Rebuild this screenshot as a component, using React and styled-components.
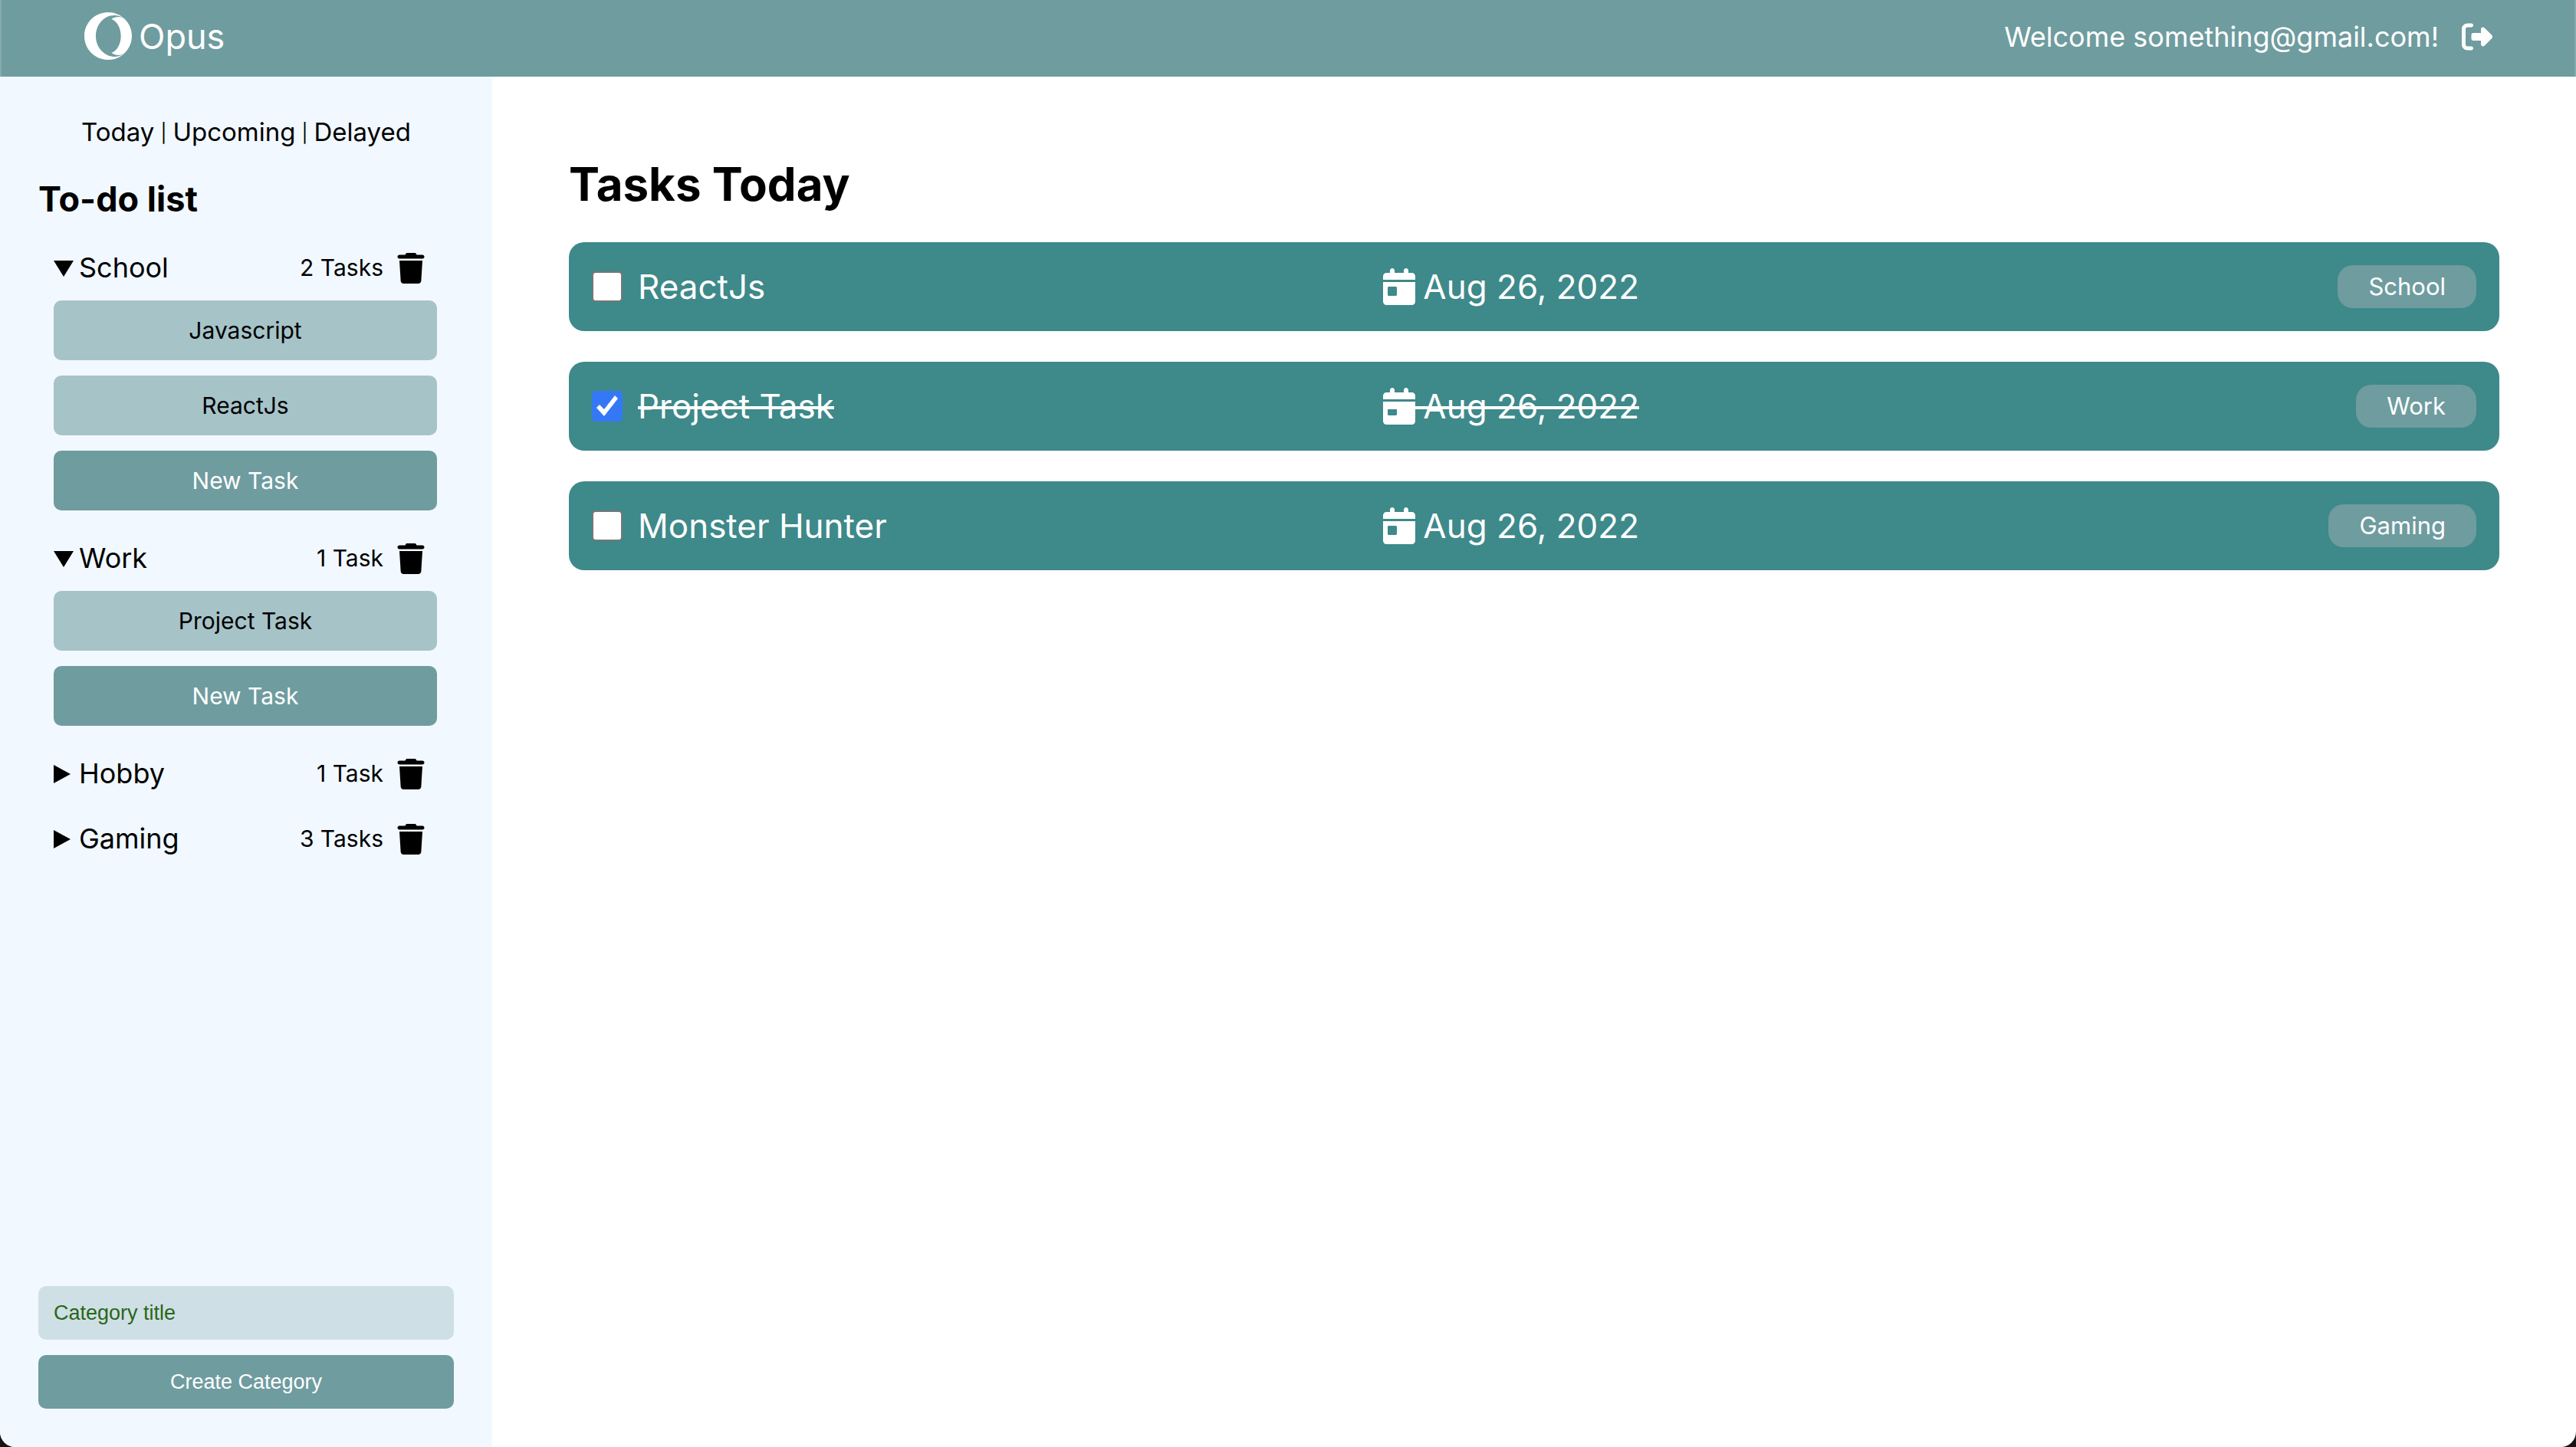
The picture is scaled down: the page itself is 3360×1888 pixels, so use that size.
import React, { useState } from 'react';
import styled, { createGlobalStyle } from 'styled-components';
import { FaOpera, FaRightFromBracket, FaTrash, FaCalendarDay } from 'react-icons/fa6';

const colors = {
  bar: '#6f9c9f',
  row: '#3e898a',
  soft: '#a6c3c8',
  field: '#cfdfe6',
  side: '#f1f8ff',
};

const GlobalStyle = createGlobalStyle`
  *, *::before, *::after { box-sizing: border-box; }
  html { background: #161514; }
  body { margin: 0; font-family: Inter, "Liberation Sans", sans-serif; color: #000; }
  button, input { font: inherit; color: inherit; margin: 0; }
  h1, h2, ul { margin: 0; padding: 0; list-style: none; }
  a { color: inherit; text-decoration: none; }
`;

const Page = styled.div`
  min-height: 100vh;
  display: flex;
  flex-direction: column;
  overflow: hidden;
  background: #fff;
  border-radius: 0 0 20px 20px;
`;

const Header = styled.header`
  height: 100px;
  display: flex;
  align-items: center;
  justify-content: space-between;
  padding: 0 107px;
  border: solid #86abae;
  border-width: 0 2px;
  background: ${colors.bar};
  color: #fff;
`;

const Brand = styled.a`
  display: flex;
  align-items: center;
  gap: 8px;
  padding-bottom: 4px;
  font-size: 45px;
  line-height: 64px;
  svg { width: 64px; height: 64px; }
`;

const Account = styled.div`
  display: flex;
  align-items: center;
  gap: 30px;
  padding-bottom: 4px;
  font-size: 36px;
  line-height: 48px;
`;

const IconButton = styled.button`
  display: flex;
  padding: 0;
  border: 0;
  background: none;
  cursor: pointer;
  svg { width: ${(p) => p.$size}px; height: ${(p) => p.$size}px; }
`;

const Body = styled.div`
  flex: 1;
  display: flex;
`;

const Sidebar = styled.aside`
  flex: 0 0 642px;
  display: flex;
  flex-direction: column;
  gap: 40px;
  padding: 50px;
  background: ${colors.side};
`;

const Filters = styled.nav`
  display: flex;
  justify-content: center;
  gap: 8px;
  height: 42px;
  font-size: 33px;
  line-height: 44px;
`;

const Divider = styled.span`
  font-size: 24px;
  line-height: 48px;
`;

const SideTitle = styled.h2`
  font-size: 45px;
  font-weight: 700;
  line-height: 55px;
`;

const Categories = styled.ul`
  flex: 1;
  display: flex;
  flex-direction: column;
  gap: 40px;
  padding: 0 22px 0 20px;
`;

const Category = styled.li`
  display: flex;
  flex-direction: column;
  gap: 20px;
`;

const CategoryHead = styled.div`
  height: 45px;
  display: flex;
  align-items: center;
  gap: 16px;
  padding-right: 14px;
`;

const Toggle = styled.button`
  flex: 1;
  display: flex;
  align-items: center;
  gap: 7px;
  padding: 0;
  border: 0;
  background: none;
  font-size: 36px;
  line-height: 45px;
  text-align: left;
  cursor: pointer;
  svg { width: 26px; height: 26px; }
`;

const Count = styled.span`
  font-size: 30px;
  line-height: 45px;
`;

const SideButton = styled.button`
  height: 78px;
  border: 0;
  border-radius: 10px;
  background: ${(p) => (p.$primary ? colors.bar : colors.soft)};
  color: ${(p) => (p.$primary ? '#fff' : '#000')};
  font-size: 30px;
  cursor: pointer;
`;

const CreateForm = styled.form`
  display: flex;
  flex-direction: column;
  gap: 20px;
  font-family: "Liberation Sans", Arial, sans-serif;
  font-size: 27px;
`;

const TitleInput = styled.input`
  height: 70px;
  padding: 0 20px;
  border: 0;
  border-radius: 10px;
  background: ${colors.field};
  &::placeholder { color: #2a6717; opacity: 1; }
`;

const CreateButton = styled.button`
  height: 70px;
  border: 0;
  border-radius: 10px;
  background: ${colors.bar};
  color: #fff;
  cursor: pointer;
`;

const Main = styled.main`
  flex: 1;
  display: flex;
  flex-direction: column;
  gap: 38px;
  padding: 102px 100px 100px;
`;

const MainTitle = styled.h1`
  font-size: 60px;
  font-weight: 700;
  line-height: 76px;
`;

const TaskList = styled.ul`
  display: flex;
  flex-direction: column;
  gap: 40px;
`;

const TaskRow = styled.li`
  display: grid;
  grid-template-columns: 42% 1fr auto;
  align-items: center;
  padding: 30px;
  border-radius: 20px;
  background: ${colors.row};
  color: #fff;
  font-size: 44px;
  line-height: 56px;
`;

const TaskLabel = styled.label`
  display: flex;
  align-items: center;
  gap: 20px;
`;

const Checkbox = styled.input`
  appearance: none;
  width: 40px;
  height: 40px;
  border: 2px solid #767676;
  border-radius: 5px;
  background: #fff;
  &:checked {
    border: 0;
    background: #3478f6;
  }
  &:checked::before {
    content: "";
    display: block;
    height: 40px;
    background: #fff;
    clip-path: polygon(6px 22px, 10px 18px, 16px 24px, 30px 6px, 34px 10px, 16px 33px);
  }
`;

const Strikable = styled.span`
  position: relative;
  justify-self: start;
  display: inline-flex;
  align-items: center;
  gap: 10px;
  svg { width: 42px; height: 48px; }
  &::after {
    content: "";
    display: ${(p) => (p.$done ? 'block' : 'none')};
    position: absolute;
    left: 0;
    right: 0;
    top: 28px;
    height: 4px;
    background: #fff;
  }
`;

const Tag = styled.span`
  padding: 0 40px;
  border-radius: 20px;
  background: ${colors.bar};
  font-size: 31px;
  line-height: 56px;
`;

const Triangle = ({ open }) => (
  <svg viewBox="0 0 26 26" aria-hidden="true">
    <path d={open ? 'M0 3h26L13 24z' : 'M0 1v24l22-12z'} />
  </svg>
);

const initialCategories = [
  { name: 'School', count: '2 Tasks', open: true, tasks: ['Javascript', 'ReactJs'] },
  { name: 'Work', count: '1 Task', open: true, tasks: ['Project Task'] },
  { name: 'Hobby', count: '1 Task', open: false, tasks: [] },
  { name: 'Gaming', count: '3 Tasks', open: false, tasks: [] },
];

const initialTasks = [
  { title: 'ReactJs', date: 'Aug 26, 2022', category: 'School', done: false },
  { title: 'Project Task', date: 'Aug 26, 2022', category: 'Work', done: true },
  { title: 'Monster Hunter', date: 'Aug 26, 2022', category: 'Gaming', done: false },
];

const flip = (items, index, key) =>
  items.map((item, i) => (i === index ? { ...item, [key]: !item[key] } : item));

export default function App() {
  const [categories, setCategories] = useState(initialCategories);
  const [tasks, setTasks] = useState(initialTasks);

  return (
    <>
      <GlobalStyle />
      <Page>
        <Header>
          <Brand href="#">
            <FaOpera />
            Opus
          </Brand>
          <Account>
            Welcome something@gmail.com!
            <IconButton $size={40} aria-label="Log out">
              <FaRightFromBracket />
            </IconButton>
          </Account>
        </Header>
        <Body>
          <Sidebar>
            <Filters>
              <a href="#today">Today</a>
              <Divider>|</Divider>
              <a href="#upcoming">Upcoming</a>
              <Divider>|</Divider>
              <a href="#delayed">Delayed</a>
            </Filters>
            <SideTitle>To-do list</SideTitle>
            <Categories>
              {categories.map((category, index) => (
                <Category key={category.name}>
                  <CategoryHead>
                    <Toggle
                      aria-expanded={category.open}
                      onClick={() => setCategories(flip(categories, index, 'open'))}
                    >
                      <Triangle open={category.open} />
                      {category.name}
                    </Toggle>
                    <Count>{category.count}</Count>
                    <IconButton $size={40} aria-label={`Delete ${category.name}`}>
                      <FaTrash />
                    </IconButton>
                  </CategoryHead>
                  {category.open &&
                    category.tasks.map((task) => <SideButton key={task}>{task}</SideButton>)}
                  {category.open && <SideButton $primary>New Task</SideButton>}
                </Category>
              ))}
            </Categories>
            <CreateForm onSubmit={(event) => event.preventDefault()}>
              <TitleInput placeholder="Category title" aria-label="Category title" />
              <CreateButton type="submit">Create Category</CreateButton>
            </CreateForm>
          </Sidebar>
          <Main>
            <MainTitle>Tasks Today</MainTitle>
            <TaskList>
              {tasks.map((task, index) => (
                <TaskRow key={task.title}>
                  <TaskLabel>
                    <Checkbox
                      type="checkbox"
                      checked={task.done}
                      onChange={() => setTasks(flip(tasks, index, 'done'))}
                    />
                    <Strikable $done={task.done}>{task.title}</Strikable>
                  </TaskLabel>
                  <Strikable $done={task.done}>
                    <FaCalendarDay />
                    {task.date}
                  </Strikable>
                  <Tag>{task.category}</Tag>
                </TaskRow>
              ))}
            </TaskList>
          </Main>
        </Body>
      </Page>
    </>
  );
}
